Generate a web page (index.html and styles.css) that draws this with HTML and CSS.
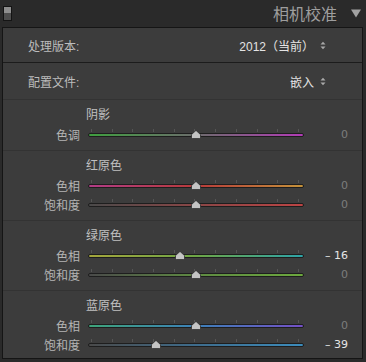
FILE: index.html
```html
<!DOCTYPE html>
<html lang="zh-CN">

<head>
  <meta charset="UTF-8">
  <title>相机校准</title>
  <link rel="stylesheet" href="styles.css">
</head>

<body>
  <header class="panel-head">
    <span class="solo"></span>
    <h1>相机校准</h1>
    <svg class="caret" width="10" height="9" viewBox="0 0 10 9"><path d="M0 0.5 H10 L5 8.5 Z" fill="#a2a2a2"/></svg>
  </header>
  <div class="panel">
    <div class="row row-process">
      <span class="row-label">处理版本:</span>
      <span class="popup">2012（当前）
        <svg class="updown" width="6" height="9" viewBox="0 0 6 9"><path d="M0.5 3.5 L3 0.8 L5.5 3.5 Z M0.5 5.5 L3 8.2 L5.5 5.5 Z" fill="#a8a8a8"/></svg>
      </span>
    </div>
    <div class="row row-profile">
      <span class="row-label">配置文件:</span>
      <span class="popup">嵌入
        <svg class="updown" width="6" height="9" viewBox="0 0 6 9"><path d="M0.5 3.5 L3 0.8 L5.5 3.5 Z M0.5 5.5 L3 8.2 L5.5 5.5 Z" fill="#a8a8a8"/></svg>
      </span>
    </div>

    <div class="group">
      <div class="group-title">阴影</div>
      <div class="slider">
        <span class="slider-label">色调</span>
        <div class="track">
          <div class="ticks"><i></i><i></i><i></i><i></i><i></i><i></i><i></i><i></i><i></i><i></i><i></i></div>
          <div class="bar bar-tint"></div>
          <svg class="thumb" style="left:50%" width="10" height="9" viewBox="0 0 10 9"><path d="M5 0.4 L9.5 4.6 V7.8 Q9.5 8.6 8.7 8.6 H1.3 Q0.5 8.6 0.5 7.8 V4.6 Z" fill="#c4c4c4" stroke="#2c2c2c" stroke-width="0.8"/></svg>
        </div>
        <span class="slider-value">0</span>
      </div>
    </div>

    <div class="group">
      <div class="group-title">红原色</div>
      <div class="slider">
        <span class="slider-label">色相</span>
        <div class="track">
          <div class="ticks"><i></i><i></i><i></i><i></i><i></i><i></i><i></i><i></i><i></i><i></i><i></i></div>
          <div class="bar bar-red-hue"></div>
          <svg class="thumb" style="left:50%" width="10" height="9" viewBox="0 0 10 9"><path d="M5 0.4 L9.5 4.6 V7.8 Q9.5 8.6 8.7 8.6 H1.3 Q0.5 8.6 0.5 7.8 V4.6 Z" fill="#c4c4c4" stroke="#2c2c2c" stroke-width="0.8"/></svg>
        </div>
        <span class="slider-value">0</span>
      </div>
      <div class="slider">
        <span class="slider-label">饱和度</span>
        <div class="track">
          <div class="ticks"><i></i><i></i><i></i><i></i><i></i><i></i><i></i><i></i><i></i><i></i><i></i></div>
          <div class="bar bar-red-sat"></div>
          <svg class="thumb" style="left:50%" width="10" height="9" viewBox="0 0 10 9"><path d="M5 0.4 L9.5 4.6 V7.8 Q9.5 8.6 8.7 8.6 H1.3 Q0.5 8.6 0.5 7.8 V4.6 Z" fill="#c4c4c4" stroke="#2c2c2c" stroke-width="0.8"/></svg>
        </div>
        <span class="slider-value">0</span>
      </div>
    </div>

    <div class="group">
      <div class="group-title">绿原色</div>
      <div class="slider">
        <span class="slider-label">色相</span>
        <div class="track">
          <div class="ticks"><i></i><i></i><i></i><i></i><i></i><i></i><i></i><i></i><i></i><i></i><i></i></div>
          <div class="bar bar-green-hue"></div>
          <svg class="thumb" style="left:42.6%" width="10" height="9" viewBox="0 0 10 9"><path d="M5 0.4 L9.5 4.6 V7.8 Q9.5 8.6 8.7 8.6 H1.3 Q0.5 8.6 0.5 7.8 V4.6 Z" fill="#c4c4c4" stroke="#2c2c2c" stroke-width="0.8"/></svg>
        </div>
        <span class="slider-value changed">&ndash; 16</span>
      </div>
      <div class="slider">
        <span class="slider-label">饱和度</span>
        <div class="track">
          <div class="ticks"><i></i><i></i><i></i><i></i><i></i><i></i><i></i><i></i><i></i><i></i><i></i></div>
          <div class="bar bar-green-sat"></div>
          <svg class="thumb" style="left:50%" width="10" height="9" viewBox="0 0 10 9"><path d="M5 0.4 L9.5 4.6 V7.8 Q9.5 8.6 8.7 8.6 H1.3 Q0.5 8.6 0.5 7.8 V4.6 Z" fill="#c4c4c4" stroke="#2c2c2c" stroke-width="0.8"/></svg>
        </div>
        <span class="slider-value">0</span>
      </div>
    </div>

    <div class="group">
      <div class="group-title">蓝原色</div>
      <div class="slider">
        <span class="slider-label">色相</span>
        <div class="track">
          <div class="ticks"><i></i><i></i><i></i><i></i><i></i><i></i><i></i><i></i><i></i><i></i><i></i></div>
          <div class="bar bar-blue-hue"></div>
          <svg class="thumb" style="left:50%" width="10" height="9" viewBox="0 0 10 9"><path d="M5 0.4 L9.5 4.6 V7.8 Q9.5 8.6 8.7 8.6 H1.3 Q0.5 8.6 0.5 7.8 V4.6 Z" fill="#c4c4c4" stroke="#2c2c2c" stroke-width="0.8"/></svg>
        </div>
        <span class="slider-value">0</span>
      </div>
      <div class="slider">
        <span class="slider-label">饱和度</span>
        <div class="track">
          <div class="ticks"><i></i><i></i><i></i><i></i><i></i><i></i><i></i><i></i><i></i><i></i><i></i></div>
          <div class="bar bar-blue-sat"></div>
          <svg class="thumb" style="left:31.3%" width="10" height="9" viewBox="0 0 10 9"><path d="M5 0.4 L9.5 4.6 V7.8 Q9.5 8.6 8.7 8.6 H1.3 Q0.5 8.6 0.5 7.8 V4.6 Z" fill="#c4c4c4" stroke="#2c2c2c" stroke-width="0.8"/></svg>
        </div>
        <span class="slider-value changed">&ndash; 39</span>
      </div>
    </div>
  </div>
</body>

</html>
```

FILE: styles.css
```css
html,
body {
  margin: 0;
  padding: 0;
  height: 100%;
  background: #2a2a2a;
  overflow: hidden;
}

body {
  font-family: "Liberation Sans", "Noto Sans CJK SC", sans-serif;
  font-size: 12px;
  color: #b9b9b9;
}

.panel-head {
  height: 27px;
  display: flex;
  align-items: center;
  padding: 0 5px 0 3px;
}

.solo {
  width: 7px;
  height: 13px;
  border: 1px solid #141414;
  background: linear-gradient(#8e8e8e 0, #8e8e8e 50%, #4e4e4e 50%, #4e4e4e 100%);
}

h1 {
  margin: 0 14px 0 auto;
  padding: 0;
  font-family: "Noto Sans CJK SC", sans-serif;
  font-size: 16px;
  font-weight: normal;
  line-height: 27px;
  color: #9e9e9e;
}

.caret {
  display: block;
}

.panel {
  margin: 0 3px 0 2px;
  border: 1px solid #151515;
  background: #3c3c3c;
}

.row {
  display: flex;
  align-items: center;
  justify-content: space-between;
  padding: 0 36px 0 25px;
}

.row-process {
  height: 34px;
  border-bottom: 1px solid #1c1c1c;
}

.row-profile {
  height: 36px;
}

.row-label {
  color: #bcbcbc;
}

.popup {
  display: flex;
  align-items: center;
  gap: 6px;
  color: #e4e4e4;
}

.updown {
  display: block;
}

.group {
  border-top: 1px solid #333333;
  padding: 6px 0 6px;
}

.group:last-child {
  padding-bottom: 4px;
}

.group-title {
  height: 19px;
  line-height: 19px;
  padding-left: 83px;
  color: #c0c0c0;
}

.slider {
  display: flex;
  align-items: center;
  height: 19px;
}

.slider-label {
  width: 77px;
  text-align: right;
  color: #b4b4b4;
}

.track {
  position: relative;
  width: 216px;
  height: 19px;
  margin-left: 8px;
  padding-top: 4px;
  box-sizing: border-box;
}

.ticks {
  display: flex;
  justify-content: space-between;
  height: 3px;
  padding: 0 5px 0 3px;
}

.ticks i {
  width: 1px;
  height: 3px;
  background: #555555;
}

.bar {
  height: 4px;
  margin-top: 1px;
  border: 1px solid #1e1e1e;
  border-radius: 2px;
  box-sizing: border-box;
}

.bar-tint {
  background: linear-gradient(to right, #3f9e3f, #6c6c6c 50%, #b23cb6);
}

.bar-red-hue {
  background: linear-gradient(to right, #b23c86, #b83a3a 50%, #c4923a);
}

.bar-red-sat {
  background: linear-gradient(to right, #4a4a4a, #8a4646 50%, #bc4444);
}

.bar-green-hue {
  background: linear-gradient(to right, #a4a63c, #6ea646 50%, #2ea4a8);
}

.bar-green-sat {
  background: linear-gradient(to right, #4a4a4a, #5e8a42 50%, #6ca83e);
}

.bar-blue-hue {
  background: linear-gradient(to right, #3ea47a, #3c80b8 50%, #7450c6);
}

.bar-blue-sat {
  background: linear-gradient(to right, #4a4a4a, #3e6c8c 50%, #3c8cbc);
}

.thumb {
  position: absolute;
  top: 5px;
  transform: translateX(-50%);
  display: block;
}

.slider-value {
  width: 44px;
  text-align: right;
  color: #7c7c7c;
  font-family: "DejaVu Sans", "Liberation Sans", sans-serif;
  font-size: 11px;
}

.slider-value.changed {
  color: #e6e6e6;
}
```
